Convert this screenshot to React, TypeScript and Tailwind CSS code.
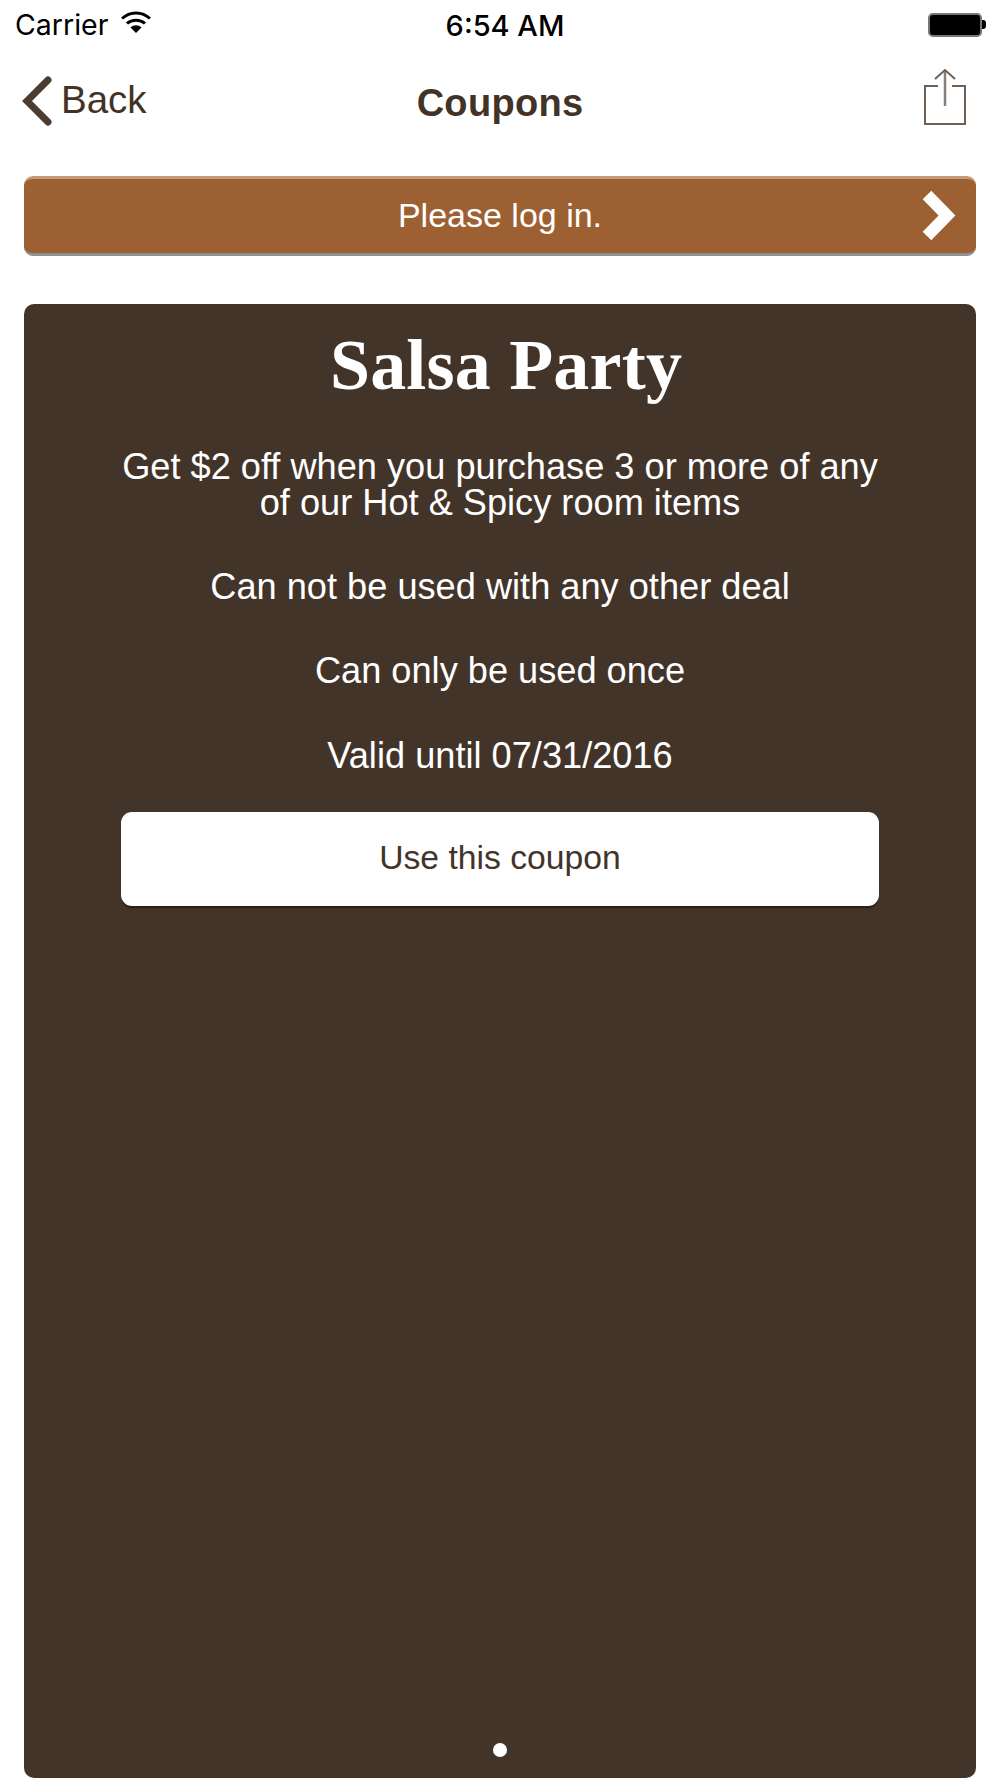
export default function App() {
  const sans = "font-['Liberation_Sans',Arial,sans-serif]";
  return (
    <div className={`w-[1000px] h-[1778px] bg-white flex flex-col overflow-hidden ${sans}`}>
      {/* status bar */}
      <div className="h-[50px] flex items-center justify-between pl-[15px] pr-[14px] text-black font-['Inter',sans-serif] relative">
        <div className="flex items-center gap-[13px]">
          <span className="text-[28.5px] leading-[50px]">Carrier</span>
          <svg width="30" height="23" viewBox="0 0 30 23" className="mb-[6px]">
            <path d="M1 7.5 C9 0 21 0 29 7.5" fill="none" stroke="#000" strokeWidth="3" />
            <path d="M6 12.5 C11 8 19 8 24 12.5" fill="none" stroke="#000" strokeWidth="3" />
            <path d="M9.5 16.5 C13 13.5 17 13.5 20.5 16.5 L15 22 Z" fill="#000" />
          </svg>
        </div>
        <span className="absolute left-[10px] right-0 top-[1px] text-center text-[29px] font-medium leading-[50px]">6:54 AM</span>
        <div className="flex items-center mb-[1px]">
          <div className="w-[54px] h-[24px] rounded-[5px] bg-black border-2 border-[#777]" />
          <div className="w-[4px] h-[9px] bg-black rounded-r-[3px]" />
        </div>
      </div>

      {/* nav */}
      <div className="h-[126px] flex items-start justify-between relative pl-[21px] pr-[34px] text-[#433327]">
        <div className="flex items-center gap-[8px] mt-[26px]">
          <svg width="32" height="50" viewBox="0 0 32 50">
            <path d="M27 4 L6 25 L27 46" fill="none" stroke="#4d3d31" strokeWidth="7" strokeLinecap="round" />
          </svg>
          <span className="text-[38.5px] leading-[48px] mb-[2px]">Back</span>
        </div>
        <span className="absolute left-0 right-0 top-[31px] text-center text-[38px] leading-[44px] font-bold tracking-[0.3px]">Coupons</span>
        <svg width="42" height="58" viewBox="0 0 42 58" className="mt-[18px]" fill="none" stroke="#6e6157" strokeWidth="2">
          <path d="M14 18 H1 V56 H41 V18 H28" />
          <path d="M21 2 V38" stroke="#8a7f77" strokeWidth="2.5" />
          <path d="M11 11 L21 2 L31 11" />
        </svg>
      </div>

      {/* banner */}
      <div className="mx-[24px] h-[80px] rounded-[9px] bg-[#9d6032] border-t-[3px] border-t-[#c49a7b] border-b-[3px] border-b-[#8f9091] flex items-center justify-center relative shrink-0">
        <span className="text-[34px] text-white mb-[2px]">Please log in.</span>
        <svg width="38" height="52" viewBox="0 0 38 52" className="absolute right-[16px] top-[11px]">
          <path d="M5 5 L25 25.5 L5 46" fill="none" stroke="#fff" strokeWidth="12" strokeLinejoin="miter" />
        </svg>
      </div>

      {/* coupon card */}
      <div className="mx-[24px] mt-[48px] flex-1 rounded-[10px] bg-[#43342a] flex flex-col items-center relative text-white">
        <h1 className="font-['Liberation_Serif',serif] font-bold text-[72px] leading-[80px] tracking-[0.2px] mt-[21px] ml-[12px]">Salsa Party</h1>
        <div className="w-[758px] text-center text-[36.2px] leading-[36px] mt-[44px]">
          <p>Get $2 off when you purchase 3 or more of any of our Hot &amp; Spicy room items</p>
          <p className="mt-[48px]">Can not be used with any other deal</p>
          <p className="mt-[48px]">Can only be used once</p>
          <p className="mt-[48.5px]">Valid until 07/31/2016</p>
        </div>
        <div className="w-[758px] h-[94px] mt-[38px] rounded-[11px] bg-white shadow-[0_2px_1px_#2a1f18] flex items-center justify-center text-[#43342a] text-[33.7px]">
          <span className="mb-[2px]">Use this coupon</span>
        </div>
        <div className="absolute bottom-[21px] left-1/2 -translate-x-1/2 w-[14px] h-[14px] rounded-full bg-white" />
      </div>
    </div>
  );
}
